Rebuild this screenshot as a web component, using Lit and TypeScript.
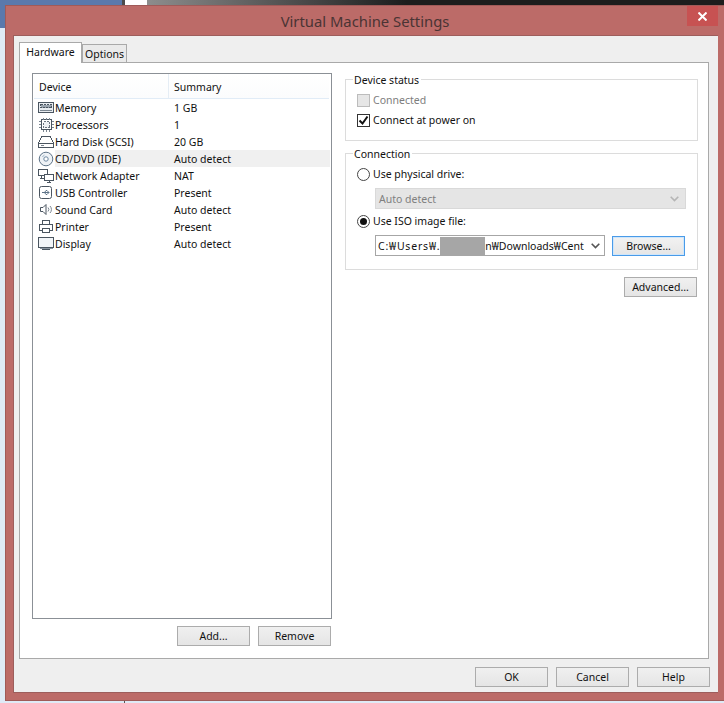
import { LitElement, html, css, svg } from "lit";
import { customElement } from "lit/decorators.js";

const ic = (body: unknown) => html`<svg class="ico" viewBox="0 0 17 16" width="17" height="16" fill="none" stroke="#4a5560" stroke-width="1" shape-rendering="crispEdges">${body}</svg>`;

const icons: Record<string, unknown> = {
  memory: ic(svg`<rect x="0.5" y="2.5" width="15" height="10" fill="#e8ecf0"/><rect x="2.5" y="4.5" width="11" height="3" fill="#9aa4ae" stroke-dasharray="2 1"/><path d="M2 10.5h12" stroke="#7b8691"/>`),
  cpu: ic(svg`<rect x="3.5" y="2.5" width="10" height="10" fill="#fff"/><rect x="5.5" y="4.5" width="6" height="6" fill="#eef1f4" stroke="#6b7580" stroke-dasharray="2 1"/><path d="M1 4.5h2M1 7.5h2M1 10.5h2M14 4.5h2M14 7.5h2M14 10.5h2M5.5 0.5v2M8.5 0.5v2M11.5 0.5v2M5.5 13v2M8.5 13v2M11.5 13v2" stroke="#7b8691"/>`),
  hdd: ic(svg`<path d="M3.5 2.5h9l3 7v4h-15v-4z" fill="#fff"/><path d="M1 9.5h14" /><path d="M3 11.5h3" stroke="#7b8691"/>`),
  cd: html`<svg class="ico" viewBox="0 0 17 16" width="17" height="16" fill="none" stroke="#5d7388"><circle cx="8" cy="8" r="6.8" fill="#eef2f6"/><circle cx="8" cy="8" r="2.2" fill="#fff" stroke="#6c87a0"/><path d="M4.5 6a4 4 0 0 1 2-2" stroke="#9db2c6"/></svg>`,
  net: ic(svg`<rect x="0.5" y="1.5" width="9" height="6" fill="#fff"/><rect x="6.5" y="6.5" width="9" height="6" fill="#fff"/><path d="M3.5 7.5v3M1.5 10.5h4M11 12.5v2M9 14.5h4"/>`),
  usb: html`<svg class="ico" viewBox="0 0 17 16" width="17" height="16" fill="none" stroke="#4a5560"><rect x="1.5" y="1.5" width="12" height="12" rx="2" fill="#fff"/><path d="M4 7.5h7M9 5.5l2 2-2 2M6.5 7.5l1.5-2h1M6.5 7.5l1.5 2h1" stroke="#5d7388"/></svg>`,
  sound: html`<svg class="ico" viewBox="0 0 17 16" width="17" height="16" fill="none" stroke="#4a5560"><path d="M2.5 5.5h2.5l3-3v10l-3-3h-2.5z" fill="#fff"/><path d="M10 5.5a3 3 0 0 1 0 4M12 4a5 5 0 0 1 0 7" stroke="#7b8691"/></svg>`,
  printer: ic(svg`<rect x="4.5" y="1.5" width="7" height="4" fill="#fff"/><rect x="1.5" y="5.5" width="13" height="6" fill="#fff"/><rect x="4.5" y="9.5" width="7" height="4" fill="#fff"/>`),
  display: ic(svg`<rect x="0.5" y="1.5" width="15" height="10" fill="#f2f5f8"/><path d="M4 13.5h8" /><path d="M1.5 12.5h13" stroke="#8a95a0"/>`),
};

const rows = [
  ["memory", "Memory", "1 GB"],
  ["cpu", "Processors", "1"],
  ["hdd", "Hard Disk (SCSI)", "20 GB"],
  ["cd", "CD/DVD (IDE)", "Auto detect"],
  ["net", "Network Adapter", "NAT"],
  ["usb", "USB Controller", "Present"],
  ["sound", "Sound Card", "Auto detect"],
  ["printer", "Printer", "Present"],
  ["display", "Display", "Auto detect"],
];

const chevron = html`<svg class="chev" viewBox="0 0 9 6" width="9" height="6" fill="none" stroke="currentColor" stroke-width="1.6"><path d="M0.7 0.8L4.5 4.6L8.3 0.8"/></svg>`;

@customElement("app-root")
export class AppRoot extends LitElement {
  static styles = css`
    :host { display: block; width: 724px; height: 703px; position: relative; overflow: hidden; background: #dfeaf6;
      font-family: "Noto Sans", "Open Sans", sans-serif; font-size: 10.5px; color: #111; }
    * { box-sizing: border-box; }
    .backdrop { position: absolute; left: 0; top: 0; width: 724px; height: 703px; }
    .bd-top { display: flex; height: 28px; }
    .bd-blue { width: 122px; background: #5a79ac; }
    .bd-line { width: 3px; background: #4c4c4c; }
    .bd-white { width: 22px; background: #fff; }
    .bd-grad { flex: 1; background: linear-gradient(90deg, #8d8d8d, #1d1d1d 45%, #1d1d1d); }
    .bd-tick { position: absolute; left: 124px; top: 700px; width: 1px; height: 3px; background: #555; }
    .window { position: relative; margin: 5px 0 0 5px; width: 719px; height: 696px; background: #bc6b68;
      border: 1px solid #a05a58; border-right: none; display: flex; flex-direction: column; padding: 0 6px 7px 7px; }
    .titlebar { height: 29px; flex: none; display: flex; align-items: center; justify-content: center; position: relative; }
    .title { font-size: 14.8px; color: #4a3434; padding-top: 1px; margin-left: -1px; }
    .close { position: absolute; right: 0; top: 0; width: 31px; height: 20px; background: #c75252; display: flex; align-items: center; justify-content: center; }
    .inner { flex: 1; background: #efefef; border: 1px solid #9d5e5c; border-right: none; display: flex; flex-direction: column; padding: 5px 7px 0 5px; min-height: 0; }
    .tabs { display: flex; align-items: flex-end; height: 21px; flex: none; position: relative; z-index: 1; }
    .tab { border: 1px solid #a9a9a9; border-bottom: none; display: flex; align-items: center; justify-content: center; }
    .tab.on { width: 63px; height: 21px; background: #fff; margin-bottom: -1px; padding-bottom: 3px; }
    .tab.off { width: 45px; height: 18px; background: #eaeaea; }
    .panel { width: 690px; height: 597px; background: #fff; border: 1px solid #a9a9a9; flex: none; display: grid; grid-template-columns: 300px 353px; column-gap: 13px; padding: 10px 0 0 12px; }
    .left { display: flex; flex-direction: column; }
    .list { height: 546px; border: 1px solid #8b9096; padding: 0 1px; flex: none; background: #fff; }
    .lhead { display: grid; grid-template-columns: 134px 1fr; height: 25px; border-bottom: 1px solid #e1ecf7; margin-right: 1px; background: linear-gradient(#fff, #fbfcfd); }
    .lhead span { display: flex; align-items: center; padding: 1px 0 0 5px; }
    .lhead span + span { border-left: 1px solid #e5edf5; }
    .lrow { display: grid; grid-template-columns: 21px 113px 1fr; height: 17px; align-items: center; }
    .lrow .ico { margin-left: 4px; display: block; }
    .lrow.sel .n, .lrow.sel .s { background: #f0f0f0; align-self: stretch; display: flex; align-items: center; }
    .n { white-space: nowrap; }
    .s { padding-left: 6px; }
    .btnrow { display: flex; justify-content: flex-end; gap: 8px; margin-top: 7px; padding-right: 1px; }
    .btn { width: 73px; height: 20px; border: 1px solid #acacac; background: linear-gradient(#f0f0f0, #e5e5e5); display: flex; align-items: center; justify-content: center; color: #111; }
    .btn.focus { border-color: #4a9be8; box-shadow: inset 0 0 0 1px #cfe6fb; background: linear-gradient(#f2f2f2, #e6e6e6); }
    .right { display: flex; flex-direction: column; margin-top: -2px; }
    fieldset { margin: 0; border: 1px solid #dcdcdc; padding: 3px 0 0 11px; min-width: 0; display: block; flex: none; }
    legend { padding: 2px 2px 0 1px; margin-left: -4px; line-height: 14px; }
    .f1 { height: 70px; }
    .f2 { height: 125px; margin-top: 4px; }
    .chk { display: flex; align-items: center; gap: 3px; height: 20px; }
    .chk.iso { margin-top: 2px; }
    .box { width: 13px; height: 13px; border: 1px solid #333; background: #fff; display: flex; align-items: center; justify-content: center; flex: none; }
    .box.dis { background: #e6e6e6; border-color: #bcbcbc; }
    .dis-t { color: #7d7d7d; }
    .radio { width: 13px; height: 13px; border-radius: 50%; border: 1px solid #444; background: #fff; flex: none; display: flex; align-items: center; justify-content: center; }
    .radio i { width: 7px; height: 7px; border-radius: 50%; background: #111; display: block; }
    .combo-dis { margin: 4px 0 0 18px; width: 311px; height: 21px; background: #e5e5e5; border: 1px solid #d9d9d9; display: flex; align-items: center; justify-content: space-between; padding: 0 6px 0 3px; color: #7f7f7f; }
    .chev { color: #555; flex: none; }
    .combo-dis .chev { color: #b5b5b5; }
    .isorow { display: flex; align-items: center; margin: 4px 0 0 18px; gap: 7px; }
    .combo { width: 230px; height: 21px; border: 1px solid #a6a6a6; background: #fff; display: flex; align-items: stretch; padding: 0 4px 0 2px; white-space: nowrap; overflow: hidden; }
    .combo span { display: flex; align-items: center; }
    .combo .path-a { letter-spacing: 0.8px; }
    .combo .blur { width: 45px; background: #a6a6a6; flex: none; margin-top: 1px; }
    .combo .chev { align-self: center; margin-left: auto; }
    .adv { align-self: flex-end; margin: 7px 1px 0 0; }
    .footer { display: flex; justify-content: flex-end; gap: 8px; padding: 8px 0 0 0; margin-right: 1px; }
  `;
  render() {
    return html`
      <div class="backdrop">
        <div class="bd-top"><div class="bd-blue"></div><div class="bd-line"></div><div class="bd-white"></div><div class="bd-grad"></div></div>
        <div class="bd-tick"></div>
      </div>
      <div class="window">
        <div class="titlebar">
          <div class="title">Virtual Machine Settings</div>
          <div class="close"><svg viewBox="0 0 9 9" width="9" height="9" stroke="#fff" stroke-width="2"><path d="M0.5 0.5l8 8M8.5 0.5l-8 8"/></svg></div>
        </div>
        <div class="inner">
          <div class="tabs"><div class="tab on">Hardware</div><div class="tab off">Options</div></div>
          <div class="panel">
            <div class="left">
              <div class="list">
                <div class="lhead"><span>Device</span><span>Summary</span></div>
                ${rows.map(r => html`<div class="lrow ${r[0] === "cd" ? "sel" : ""}">${icons[r[0]]}<span class="n">${r[1]}</span><span class="s">${r[2]}</span></div>`)}
              </div>
              <div class="btnrow"><div class="btn">Add...</div><div class="btn">Remove</div></div>
            </div>
            <div class="right">
              <fieldset class="f1">
                <legend>Device status</legend>
                <div class="chk"><span class="box dis"></span><span class="dis-t">Connected</span></div>
                <div class="chk"><span class="box"><svg viewBox="0 0 11 11" width="11" height="11" fill="none" stroke="#111" stroke-width="2"><path d="M1.5 5.5l3 3 5-7"/></svg></span><span>Connect at power on</span></div>
              </fieldset>
              <fieldset class="f2">
                <legend>Connection</legend>
                <div class="chk"><span class="radio"></span><span>Use physical drive:</span></div>
                <div class="combo-dis"><span>Auto detect</span>${chevron}</div>
                <div class="chk iso"><span class="radio"><i></i></span><span>Use ISO image file:</span></div>
                <div class="isorow">
                  <div class="combo"><span class="path-a">C:₩Users₩.</span><span class="blur"></span><span>n₩Downloads₩Cent</span>${chevron}</div>
                  <div class="btn focus">Browse...</div>
                </div>
              </fieldset>
              <div class="btn adv">Advanced...</div>
            </div>
          </div>
          <div class="footer"><div class="btn">OK</div><div class="btn">Cancel</div><div class="btn">Help</div></div>
        </div>
      </div>
    `;
  }
}
